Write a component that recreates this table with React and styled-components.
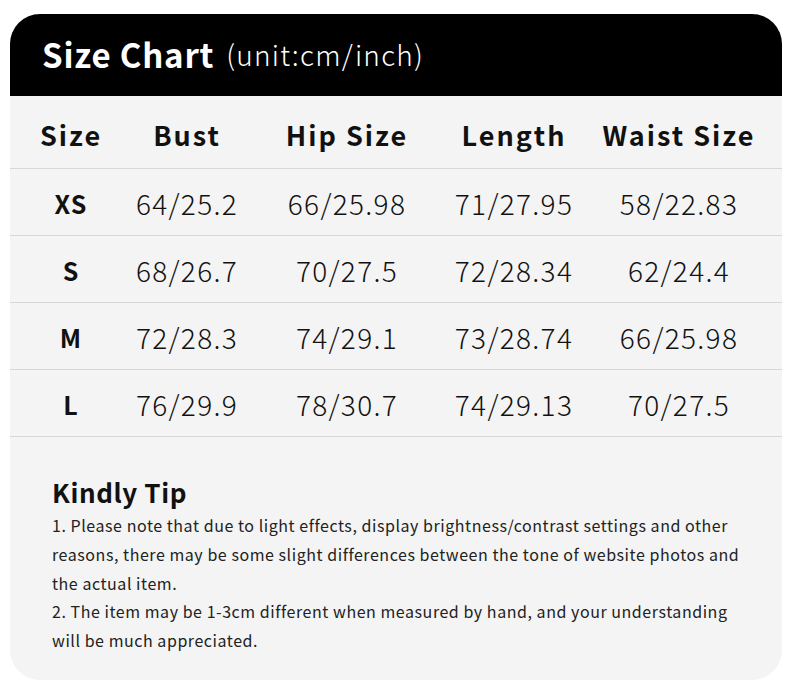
import React from "react"
import styled, { createGlobalStyle } from "styled-components"

const GlobalStyle = createGlobalStyle`
  body {
    margin: 0;
    background: #ffffff;
    font-family: "Noto Sans CJK SC", "Noto Sans", sans-serif;
  }
`

const headers = ["Size", "Bust", "Hip Size", "Length", "Waist Size"]

const rows = [
  ["XS", "64/25.2", "66/25.98", "71/27.95", "58/22.83"],
  ["S", "68/26.7", "70/27.5", "72/28.34", "62/24.4"],
  ["M", "72/28.3", "74/29.1", "73/28.74", "66/25.98"],
  ["L", "76/29.9", "78/30.7", "74/29.13", "70/27.5"],
]

const Page = styled.div`
  width: 790px;
  height: 695px;
  padding: 14px 8px 0 10px;
  box-sizing: border-box;
`

const Card = styled.div`
  width: 772px;
  height: 666px;
  background: #f4f4f4;
  border-radius: 30px;
  overflow: hidden;
  display: flex;
  flex-direction: column;
`

const Header = styled.div`
  height: 82px;
  background: #000;
  display: flex;
  align-items: center;
  padding: 0 0 2px 32px;
  box-sizing: border-box;
  color: #fff;
`

const Title = styled.span`
  font-size: 33px;
  font-weight: 700;
  letter-spacing: 0.8px;
`

const Unit = styled.span`
  font-size: 28px;
  font-weight: 300;
  margin-left: 12px;
  letter-spacing: 1.2px;
`

const Table = styled.div`
  display: grid;
  grid-template-columns: 122px 110px 210px 124px 1fr;
`

const Row = styled.div`
  display: contents;
`

const Cell = styled.div`
  height: ${p => (p.$head ? "73px" : "67px")};
  display: flex;
  align-items: center;
  justify-content: center;
  border-bottom: 1px solid #d8d8d8;
  box-sizing: border-box;
  color: #111;
  font-size: ${p => (p.$head ? "27px" : p.$size ? "25px" : "28px")};
  font-weight: ${p => (p.$head || p.$size ? 700 : 300)};
  letter-spacing: ${p => (p.$head ? "2px" : p.$size ? "1px" : "1.3px")};
  padding-top: ${p => (p.$head ? "4px" : "2px")};
`

const Tip = styled.div`
  padding: 38px 40px 0 42px;
  color: #222;
`

const TipTitle = styled.h3`
  margin: 0 0 2px;
  font-size: 26px;
  font-weight: 700;
  color: #111;
  letter-spacing: 0.6px;
  line-height: 34px;
`

const TipText = styled.p`
  margin: 0;
  font-size: 16px;
  line-height: 28.8px;
  letter-spacing: 0.55px;
  font-weight: 400;
`

export default function App() {
  return (
    <Page>
      <GlobalStyle />
      <Card>
        <Header>
          <Title>Size Chart</Title>
          <Unit>(unit:cm/inch)</Unit>
        </Header>
        <Table>
          <Row>
            {headers.map(h => (
              <Cell key={h} $head>
                {h}
              </Cell>
            ))}
          </Row>
          {rows.map(r => (
            <Row key={r[0]}>
              {r.map((v, i) => (
                <Cell key={i} $size={i === 0}>
                  {v}
                </Cell>
              ))}
            </Row>
          ))}
        </Table>
        <Tip>
          <TipTitle>Kindly Tip</TipTitle>
          <TipText>
            1. Please note that due to light effects, display brightness/contrast settings and other
            reasons, there may be some slight differences between the tone of website photos and
            the actual item.
          </TipText>
          <TipText>
            2. The item may be 1-3cm different when measured by hand, and your understanding
            will be much appreciated.
          </TipText>
        </Tip>
      </Card>
    </Page>
  )
}
